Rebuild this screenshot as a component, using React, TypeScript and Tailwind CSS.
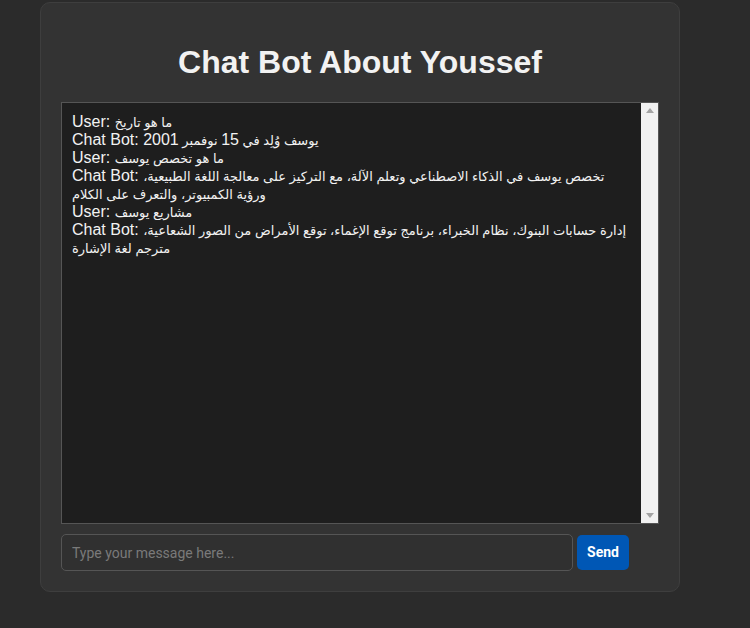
import { useState } from "react";

const messages = [
  { sender: "User", text: "ما هو تاريخ" },
  { sender: "Chat Bot", text: "يوسف وُلِد في 15 نوفمبر 2001" },
  { sender: "User", text: "ما هو تخصص يوسف" },
  {
    sender: "Chat Bot",
    text: "تخصص يوسف في الذكاء الاصطناعي وتعلم الآلة، مع التركيز على معالجة اللغة الطبيعية، ورؤية الكمبيوتر، والتعرف على الكلام",
  },
  { sender: "User", text: "مشاريع يوسف" },
  {
    sender: "Chat Bot",
    text: "إدارة حسابات البنوك، نظام الخبراء، برنامج توقع الإغماء، توقع الأمراض من الصور الشعاعية، مترجم لغة الإشارة",
  },
];

// digits keep the latin size, arabic runs use the smaller fallback size
const MessageText = ({ text }: { text: string }) => (
  <>
    {text.split(/(\d+)/).map((part, i) =>
      /^\d+$/.test(part) ? (
        <span key={i} className="text-[16px]">
          {part}
        </span>
      ) : (
        <span key={i} className="text-[13px] leading-none">
          {part}
        </span>
      )
    )}
  </>
);

const Scrollbar = () => (
  <div className="w-[17px] shrink-0 bg-[#f1f1f1] flex flex-col justify-between items-center py-[5px]">
    <svg width="8" height="5" viewBox="0 0 8 5">
      <path d="M0 5 L4 0 L8 5 Z" fill="#a3a3a3" />
    </svg>
    <svg width="8" height="5" viewBox="0 0 8 5">
      <path d="M0 0 L8 0 L4 5 Z" fill="#a3a3a3" />
    </svg>
  </div>
);

export default function App() {
  const [input, setInput] = useState("");

  return (
    <div className="min-h-[628px] bg-[#2b2b2b] pt-[2px] font-['Liberation_Sans','DejaVu_Sans',Arial,sans-serif] text-[#f2f2f2]">
      <div className="mx-[40px] w-[640px] rounded-[10px] border border-[#3e3e3e] bg-[#333333] px-[20px] pt-[20px] pb-[20px]">
        <h1 className="my-[21px] text-center text-[32px] leading-[37px] font-bold text-[#f2f2f2]">
          Chat Bot About Youssef
        </h1>
        <div className="flex h-[422px] border border-[#555555] bg-[#1e1e1e]">
          <div className="flex-1 px-[10px] pt-[10px] text-[16px] leading-[18px]">
            {messages.map((m, i) => (
              <div key={i}>
                {m.sender}: <MessageText text={m.text} />
              </div>
            ))}
          </div>
          <Scrollbar />
        </div>
        <div className="mt-[10px] flex items-center gap-[4px]">
          <input
            value={input}
            onChange={(e) => setInput(e.target.value)}
            placeholder="Type your message here..."
            className="h-[37px] w-[512px] rounded-[5px] border border-[#555555] bg-[#303030] px-[10px] text-[14px] text-[#f2f2f2] outline-none placeholder:text-[#7a7a7a] font-['Roboto',sans-serif]"
          />
          <button className="h-[35px] w-[52px] rounded-[5px] bg-[#0057b5] text-[14px] font-bold text-white font-['Roboto',sans-serif]">
            Send
          </button>
        </div>
      </div>
    </div>
  );
}
